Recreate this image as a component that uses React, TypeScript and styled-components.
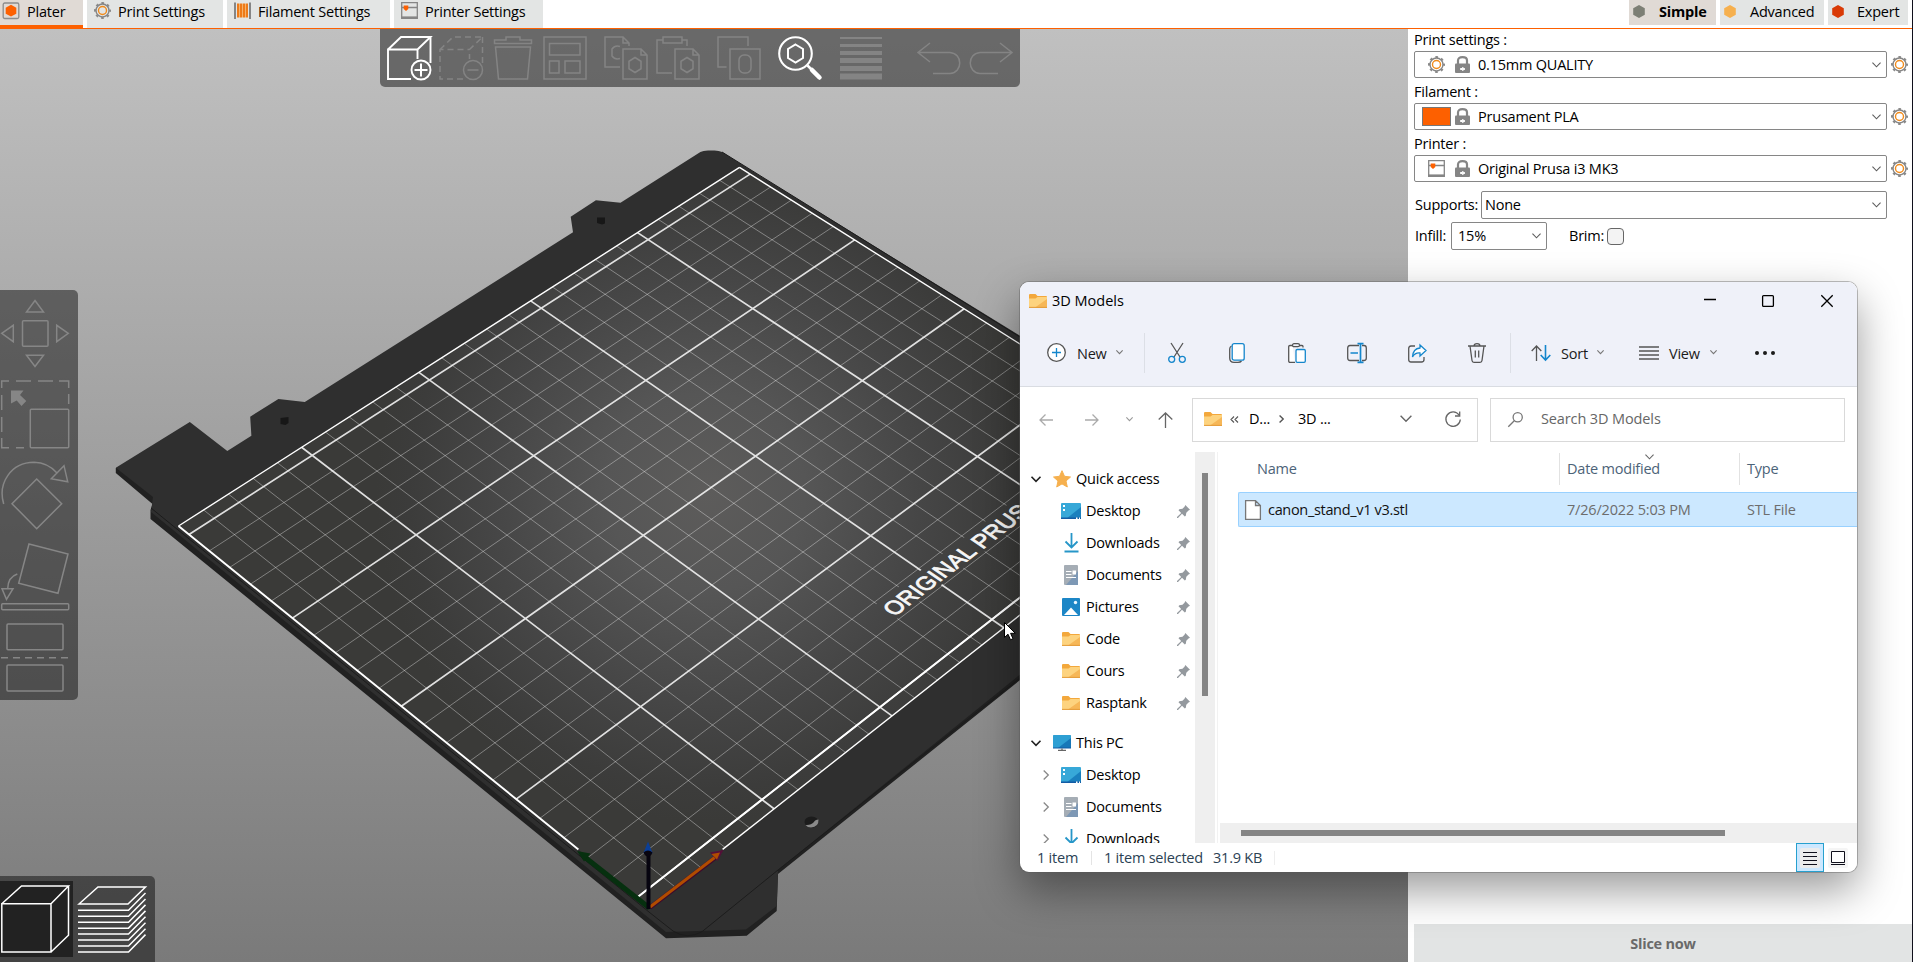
import React from "react";
import styled, { createGlobalStyle, css } from "styled-components";

const GlobalStyle = createGlobalStyle`
  *, *::before, *::after { box-sizing: border-box; }
  body { margin: 0; overflow: hidden; }
  svg { display: block; flex: none; overflow: visible; }
`;

const ORANGE = "#fd6000";

/* ---------- page frame ---------- */

const Page = styled.div`
  position: relative;
  width: 1913px;
  height: 962px;
  display: flex;
  flex-direction: column;
  overflow: hidden;
  background: #fff;
  color: #000;
  border-right: 1px solid #10101c;
  font-family: "Open Sans", "Noto Sans", sans-serif;
  font-size: 14.5px;
  letter-spacing: -0.22px;
  line-height: 20px;
  white-space: nowrap;
`;

const TopBar = styled.header`
  display: flex;
  justify-content: space-between;
  height: 29px;
  flex: none;
  border-bottom: 1px solid ${ORANGE};
`;

const TabList = styled.nav`
  display: flex;
  gap: 4px;
`;

const Tab = styled.div<{ $width: number; $active?: boolean }>`
  display: flex;
  align-items: flex-start;
  gap: 7px;
  width: ${(p) => p.$width}px;
  height: 28px;
  padding: 2px 0 0 ${(p) => (p.$active ? 2 : 7)}px;
  background: ${(p) => (p.$active ? "#e0dad5" : "#e3e5e4")};
  ${(p) => p.$active && css`border-bottom: 3px solid ${ORANGE};`}
`;

const ModeList = styled.div`
  display: flex;
  gap: 4px;
  padding-right: 4px;
`;

const Mode = styled.div<{ $width: number; $gap: number; $active?: boolean }>`
  display: flex;
  align-items: center;
  gap: ${(p) => p.$gap}px;
  width: ${(p) => p.$width}px;
  height: 25px;
  padding: 0 0 2px 4px;
  background: ${(p) => (p.$active ? "#e0dad5" : "#e3e5e4")};
  font-weight: ${(p) => (p.$active ? 700 : 400)};
`;

const Main = styled.main`
  display: flex;
  flex: 1;
  min-height: 0;
`;

/* ---------- 3D view ---------- */

const Viewport = styled.section`
  position: relative;
  width: 1408px;
  overflow: hidden;
  background: linear-gradient(#c0c0c0, #7a7a7a);
`;

const TopTools = styled.div`
  position: absolute;
  top: 0;
  left: 380px;
  display: flex;
  gap: 8px;
  width: 640px;
  height: 58px;
  padding: 7px 7px 0;
  border-radius: 0 0 5px 5px;
  background: rgba(0, 0, 0, 0.45);
`;

const Tool = styled.div<{ $lit?: boolean; $space?: number }>`
  width: 44px;
  height: 44px;
  margin-left: ${(p) => p.$space ?? 0}px;
  color: ${(p) => (p.$lit ? "#ffffff" : "#848484")};
`;

const SideTools = styled.div`
  position: absolute;
  top: 261px;
  left: 0;
  display: flex;
  flex-direction: column;
  gap: 13px;
  width: 78px;
  height: 410px;
  padding: 9px 0 0 1px;
  border-radius: 0 5px 5px 0;
  background: rgba(0, 0, 0, 0.45);
  color: #868686;
`;

const ViewSwitch = styled.div`
  position: absolute;
  left: 0;
  bottom: 0;
  display: flex;
  width: 155px;
  height: 86px;
  padding-top: 5px;
  border-radius: 0 5px 0 0;
  background: rgba(0, 0, 0, 0.45);
`;

const ViewButton = styled.div<{ $active?: boolean }>`
  width: 73px;
  height: 76px;
  background: ${(p) => (p.$active ? "#222222" : "transparent")};
`;

/* ---------- settings panel ---------- */

const Panel = styled.aside`
  display: flex;
  flex-direction: column;
  flex: 1;
  padding-left: 6px;
`;

const Label = styled.div`
  height: 22px;
  line-height: 22px;
  &:not(:first-child) { margin-top: 3px; }
`;

const Row = styled.div<{ $top?: number; $left?: number }>`
  display: flex;
  align-items: center;
  margin-top: ${(p) => p.$top ?? 0}px;
  margin-left: ${(p) => p.$left ?? 0}px;
`;

const Select = styled.div<{ $width: number; $height?: number; $pad?: number }>`
  display: flex;
  align-items: center;
  width: ${(p) => p.$width}px;
  height: ${(p) => p.$height ?? 27}px;
  padding: 0 5px 0 ${(p) => p.$pad ?? 3}px;
  border: 1px solid #868686;
  border-radius: 2px;
  background: #fff;
  & > :last-child { margin-left: auto; }
`;

const PresetIcon = styled.span`
  display: flex;
  justify-content: center;
  width: 29px;
  margin: 0 4px;
`;

const Swatch = styled.span`
  width: 29px;
  height: 19px;
  border: 1px solid #777;
  background: ${ORANGE};
`;

const PresetName = styled.span`
  margin-left: 8px;
`;

const GearSlot = styled.span`
  margin-left: 4px;
`;

const FieldName = styled.span<{ $width: number; $left?: number }>`
  width: ${(p) => p.$width}px;
  margin-left: ${(p) => p.$left ?? 0}px;
`;

const CheckBox = styled.span`
  width: 17px;
  height: 17px;
  border: 1px solid #666;
  border-radius: 4px;
  background: #f3f3f3;
`;

const SliceButton = styled.div`
  display: flex;
  align-items: center;
  justify-content: center;
  height: 38px;
  margin-top: auto;
  padding-top: 1px;
  background: #e2e4e4;
  color: #6a6a6a;
  font-weight: 700;
`;

/* ---------- explorer window ---------- */

const Explorer = styled.div`
  position: absolute;
  left: 1020px;
  top: 282px;
  display: flex;
  flex-direction: column;
  width: 837px;
  height: 590px;
  overflow: hidden;
  border-radius: 9px;
  background: #fff;
`;

const ExplorerShadow = styled.div`
  position: absolute;
  left: 1020px;
  top: 282px;
  width: 837px;
  height: 590px;
  border-radius: 9px;
  box-shadow: 0 0 0 1px rgba(90, 90, 90, 0.4), 0 18px 44px rgba(0, 0, 0, 0.4);
`;

const TitleBar = styled.div`
  display: flex;
  align-items: center;
  height: 38px;
  padding-left: 9px;
  background: #eff1f9;
  letter-spacing: 0;
  gap: 5px;
`;

const WindowButtons = styled.div`
  display: flex;
  margin-left: auto;
`;

const WindowButton = styled.div`
  display: flex;
  align-items: center;
  justify-content: center;
  width: 58px;
  height: 34px;
  &:last-child { width: 60px; }
`;

const CommandBar = styled.div`
  display: flex;
  align-items: center;
  height: 67px;
  border-bottom: 1px solid #d9dce2;
  background: #eff1f9;
  color: #1b1b1b;
`;

const Command = styled.div<{ $width: number; $left: number; $gap: number }>`
  display: flex;
  align-items: center;
  width: ${(p) => p.$width}px;
  padding: 0 0 1px ${(p) => p.$left}px;
  gap: ${(p) => p.$gap}px;
`;

const CommandText = styled.span<{ $after?: number }>`
  margin: 2px ${(p) => p.$after ?? 2}px 0 2px;
`;

const CommandIcon = styled.div`
  display: flex;
  justify-content: center;
  width: 60px;
`;

const Divider = styled.span<{ $height: number; $color?: string; $x?: number }>`
  width: 1px;
  height: ${(p) => p.$height}px;
  margin: 0 ${(p) => p.$x ?? 0}px;
  background: ${(p) => p.$color ?? "#dcdfe6"};
`;

const AddressRow = styled.div`
  display: flex;
  align-items: center;
  height: 65px;
`;

const NavArrows = styled.div`
  display: flex;
  align-items: center;
  width: 153px;
  margin-left: 19px;
`;

const NavGap = styled.span<{ $width: number }>`
  width: ${(p) => p.$width}px;
`;

const AddressBox = styled.div`
  display: flex;
  align-items: center;
  width: 286px;
  height: 44px;
  padding: 0 16px 1px 11px;
  border: 1px solid #d9d9d9;
`;

const Crumb = styled.span<{ $width: number; $pad?: number }>`
  display: flex;
  width: ${(p) => p.$width}px;
  padding-left: ${(p) => p.$pad ?? 0}px;
`;

const SearchBox = styled.div`
  display: flex;
  align-items: center;
  gap: 18px;
  width: 355px;
  height: 44px;
  margin-left: 12px;
  padding: 0 0 1px 17px;
  border: 1px solid #d9d9d9;
  color: #666;
  letter-spacing: -0.12px;
`;

const Body = styled.div`
  display: flex;
  height: 391px;
  flex: none;
`;

const Tree = styled.div`
  width: 175px;
  overflow: hidden;
  padding-top: 11px;
`;

const TreeRow = styled.div<{ $child?: boolean; $top?: number }>`
  display: flex;
  align-items: center;
  height: 32px;
  margin-top: ${(p) => p.$top ?? 0}px;
  padding: 0 5px 0 ${(p) => (p.$child ? 23 : 11)}px;
`;

const Twisty = styled.span<{ $child?: boolean }>`
  display: flex;
  width: ${(p) => (p.$child ? 16 : 20)}px;
`;

const TreeIcon = styled.span<{ $child?: boolean }>`
  display: flex;
  justify-content: center;
  width: ${(p) => (p.$child ? 24 : 22)}px;
  margin-right: 3px;
`;

const PinSlot = styled.span`
  margin-left: auto;
`;

const VScroll = styled.div`
  width: 20px;
  padding: 21px 7px 0;
  background: #efefef;
`;

const VThumb = styled.div`
  height: 223px;
  background: #858585;
`;

const Files = styled.div`
  display: flex;
  flex-direction: column;
  flex: 1;
  margin-left: 2px;
  border-left: 1px solid #f2f2f2;
`;

const FileHeader = styled.div`
  position: relative;
  display: flex;
  align-items: center;
  height: 33px;
  margin-bottom: 7px;
  padding-left: 20px;
  color: #4c6378;
`;

const HeadCell = styled.div<{ $width: number; $pad: number }>`
  display: flex;
  align-items: center;
  width: ${(p) => p.$width}px;
  height: 32px;
  padding: 0 0 0 ${(p) => p.$pad}px;
  & + & { border-left: 1px solid #e2e2e2; }
`;

const SortMark = styled.span`
  position: absolute;
  left: 427px;
  top: 2px;
`;

const FileRow = styled.div`
  display: flex;
  align-items: center;
  height: 35px;
  margin-left: 20px;
  padding-left: 6px;
  border: 1px solid #99d1ff;
  border-right: 0;
  border-radius: 2px 0 0 2px;
  background: #cce8ff;
`;

const FileCell = styled.span<{ $width: number; $dark?: boolean }>`
  display: flex;
  align-items: center;
  gap: 7px;
  width: ${(p) => p.$width}px;
  color: ${(p) => (p.$dark ? "#111" : "#6d6d6d")};
  letter-spacing: ${(p) => (p.$dark ? -0.32 : -0.18)}px;
`;

const HScroll = styled.div`
  height: 20px;
  margin: auto 0 0 2px;
  padding: 7px 0 0 21px;
  background: #efefef;
`;

const HThumb = styled.div`
  width: 484px;
  height: 6px;
  background: #858585;
`;

const StatusBar = styled.div`
  display: flex;
  align-items: center;
  height: 29px;
  padding-left: 17px;
  color: #2b4254;
`;

const StatusText = styled.span<{ $width: number }>`
  width: ${(p) => p.$width}px;
`;

const ViewMode = styled.span<{ $active?: boolean }>`
  display: flex;
  align-items: center;
  justify-content: center;
  width: 28px;
  height: 29px;
  margin-left: ${(p) => (p.$active ? "auto" : "0")};
  margin-right: ${(p) => (p.$active ? "0" : "5px")};
  border: 1px solid ${(p) => (p.$active ? "#26a0cf" : "transparent")};
  background: ${(p) => (p.$active ? "#cce8ff" : "transparent")};
`;

const Pointer = styled.div`
  position: absolute;
  left: 1004px;
  top: 622px;
`;

/* ---------- print bed geometry ---------- */

type Pt = [number, number];

/* Perspective map from bed millimetres to view pixels, fixed by a 150 x 200 mm quad. */
function makeProjection(w: number, h: number, q: [Pt, Pt, Pt, Pt]) {
  const [[x0, y0], [x1, y1], [x2, y2], [x3, y3]] = q;
  const dx1 = x1 - x2, dx2 = x3 - x2, dx3 = x0 - x1 + x2 - x3;
  const dy1 = y1 - y2, dy2 = y3 - y2, dy3 = y0 - y1 + y2 - y3;
  const den = dx1 * dy2 - dx2 * dy1;
  const g = (dx3 * dy2 - dx2 * dy3) / den;
  const k = (dx1 * dy3 - dx3 * dy1) / den;
  return (mx: number, my: number): Pt => {
    const u = mx / w, v = my / h, s = 1 + g * u + k * v;
    return [
      ((x1 - x0 + g * x1) * u + (x3 - x0 + k * x3) * v + x0) / s,
      ((y1 - y0 + g * y1) * u + (y3 - y0 + k * y3) * v + y0) / s,
    ];
  };
}

const project = makeProjection(150, 200, [
  [637.5, 897.2], [991.9, 619.5], [541.3, 308.2], [189, 534.5],
]);

const Y0 = -4.8, Y1 = 205.2;

const poly = (pts: Pt[]) =>
  pts.map(([x, y]) => { const p = project(x, y); return `${p[0].toFixed(1)},${p[1].toFixed(1)}`; }).join(" ");

const seg = (ax: number, ay: number, bx: number, by: number) => {
  const a = project(ax, ay), b = project(bx, by);
  return `M${a[0].toFixed(1)} ${a[1].toFixed(1)}L${b[0].toFixed(1)} ${b[1].toFixed(1)}`;
};

const range = (n: number) => Array.from({ length: n }, (_, i) => i);
const minor =
  range(26).filter((i) => i % 5).map((i) => seg(i * 10, Y0, i * 10, Y1)).join("") +
  range(21).filter((i) => i % 5).map((i) => seg(0, i * 10, 250, i * 10)).join("");
const major =
  [50, 100, 150, 200].map((x) => seg(x, Y0, x, Y1)).join("") +
  [0, 50, 100, 150, 200].map((y) => seg(0, y, 250, y)).join("");

function textMatrix(x: number, y: number) {
  const o = project(x, y), c = project(x + 30, y), u = project(x + 30, y + 6);
  const ax = (c[0] - o[0]) / 30, ay = (c[1] - o[1]) / 30;
  const bx = (u[0] - c[0]) / 6, by = (u[1] - c[1]) / 6;
  return `matrix(${ax} ${ay} ${-bx} ${-by} ${o[0]} ${o[1]})`;
}

const BedText = styled.text`
  font-family: "Liberation Sans", sans-serif;
  font-size: 7.9px;
  letter-spacing: 0.06px;
  fill: #f6f6f6;
  stroke: #f6f6f6;
  stroke-width: 0.3px;
`;

function Scene() {
  return (
    <svg width="1408" height="933" viewBox="0 29 1408 933">
      <defs>
        <radialGradient id="glow" gradientUnits="userSpaceOnUse" cx="706" cy="492" r="330">
          <stop offset="0" stopColor="#5d5c5b" />
          <stop offset="0.3" stopColor="#565656" />
          <stop offset="0.65" stopColor="#464646" />
          <stop offset="0.9" stopColor="#3c3c3b" />
          <stop offset="1" stopColor="#3a3a38" />
        </radialGradient>
      </defs>
      <path fill="#212121" d="M115.8 468V473L152.5 504L150.5 510V519L666 938.3L746.7 935.7L776.7 911L778 874L1100 616V380Z" />
      <path fill="#2f2f2f" d="M700.4 152Q703 150.5 708 150.5H714.5Q719 150.5 722 152L749.6 169.3L1100 385V610L778 870L776.7 906L746 929.5L666 932L151 512L153 497L115.8 467.7L189.8 422L227.3 451L251.4 435.7L250.2 416.7L278.4 399L304.8 402L573 232.3L570.7 216.7L595.9 200.3L620.5 202.7Z" />
      <path fill="none" stroke="#1c1c1c" d="M151 508L649 912L673 931Q687 940 702 931.7L778 870L1020 678M722 152L1020 337" />
      <path fill="#171717" d="M597 217.5h8v6l-3 1-5-1.500zM280.500 418l8-1v6l-3 2-5-1z" />
      <ellipse cx="811.500" cy="822" rx="7" ry="5.500" fill="#1c1c1c" />
      <path fill="#8a8a8a" d="M818.500 819.500Q819 827 811 827.500Q807.500 827.500 805.500 825Q811 825.500 814 822Q815 819.500 818.500 819.500Z" />

      <polygon points={poly([[0, Y0], [250, Y0], [250, Y1], [0, Y1]])} fill="url(#glow)" />
      <path d={minor} fill="none" stroke="#fff" strokeWidth="1" strokeOpacity="0.36" />
      <path d={major} fill="none" stroke="#f2f2f2" strokeWidth="1.7" strokeOpacity="0.9" />
      <path
        d={seg(0, Y1, 250, Y1) + seg(250, Y1, 250, Y0) + seg(29, Y0, 250, Y0)}
        fill="none"
        stroke="#fff"
        strokeWidth="1.4"
      />
      <path d={seg(0, 0, 250, 0) + seg(0, 24, 0, Y1)} fill="none" stroke="#fff" strokeWidth="1.9" />
      <polygon points={poly([[129, 20.5], [210, 20.5], [210, 29], [129, 29]])} fill="url(#glow)" />
      <BedText transform={textMatrix(129.8, 21.6)}>ORIGINAL PRUSA</BedText>

      <path d="M649.500 908L584 856.500" stroke="#06300f" strokeWidth="5" />
      <path d="M577 851L590.500 853.500L584 861.500Z" fill="#06300f" />
      <path d="M650 907.500L715 858" stroke="#3d0a2c" strokeWidth="4.500" />
      <path d="M650 907L716 856.500" stroke="#b04c00" strokeWidth="3" />
      <path d="M723.500 850L710 852.500L717.500 861Z" fill="#541038" />
      <path d="M720 852.500L711.500 854L717 859.500Z" fill="#b04c00" />
      <path d="M648.500 909V853" stroke="#06040f" strokeWidth="4" />
      <path d="M648 841.500L643.500 853Q648 857.500 652.500 853Z" fill="#0b3f98" />
      <path d="M643.500 852.500Q648 848.500 652.500 852.500Q651 856.500 648 856.500Q645 856.500 643.500 852.500Z" fill="#080510" />
    </svg>
  );
}

/* ---------- slicer icons ---------- */

const Stroke = ({ w, size, children }: { w: number; size: number; children: React.ReactNode }) => (
  <svg width={size} height={size} viewBox={`0 0 ${size} ${size}`} fill="none" stroke="currentColor" strokeWidth={w}>
    {children}
  </svg>
);

const hex = (cx: number, cy: number, rx: number, ry: number) =>
  `M${cx} ${cy - ry}L${cx + rx} ${cy - ry / 2}V${cy + ry / 2}L${cx} ${cy + ry}L${cx - rx} ${cy + ry / 2}V${cy - ry / 2}Z`;

const topTools: { id: string; lit?: boolean; space?: number; art: React.ReactNode }[] = [
  { id: "add", lit: true, art: <><path strokeWidth="1.900" d="M24 43H1V13.500H30.500M1 13.500L14 1H43.500L30.500 13.500V23M43.500 1V27" /><circle cx="34" cy="34" r="9.500" strokeWidth="1.900" /><path strokeWidth="2" d="M34 27.500V40.500M27.500 34H40.500" /></> },
  { id: "remove", art: <><path strokeDasharray="6 4" d="M24 43H1V13.500H30.500M1 13.500L14 1H43.500L30.500 13.500V23M43.500 1V27" /><circle cx="34" cy="34" r="9.500" /><path d="M28.500 34H39.500" /></> },
  { id: "delete", art: <path d="M3.500 4H15V1H29V4H40.500V7.500H3.500ZM4.500 11H39.500L36.500 43H7.500Z" /> },
  { id: "arrange", art: <path d="M1 1H43V43H1ZM6.500 7.500H37V19H6.500ZM6.500 25H16V37H6.500ZM22 25H37V37H22Z" /> },
  { id: "copy", space: 9, art: <><path d="M16 31H1V1H19L25 7V10M19 1V7H25M16 10.500Q11 9 8 13V20Q11 24 16 22.500" /><path d="M19 13H37L43 19V43H19ZM37 13V19H43" /><path d={hex(31, 29, 6, 7.500)} /></> },
  { id: "paste", art: <><path d="M16 37H1V4H7M26 4H31V10M7 1H26V7H7Z" /><path d="M19 13H37L43 19V43H19ZM37 13V19H43" /><path d={hex(31, 29, 6, 7.500)} /></> },
  { id: "instances", space: 9, art: <><path d="M9.500 31H1V1H31V10" /><path d="M13 13H43V43H13Z" /><rect x="22" y="19" width="12" height="18" rx="5" /></> },
  { id: "search", space: 9, lit: true, art: <><circle cx="17.500" cy="17.500" r="16.300" strokeWidth="2.100" /><path strokeWidth="2" d={hex(17.5, 17.5, 7.5, 9)} /><path strokeWidth="2.500" d="M29.500 29.500L33 33" /><path strokeWidth="4.500" strokeLinecap="round" d="M34 34L41.500 41.500" /></> },
  { id: "layers", space: 9, art: <g fill="currentColor" stroke="none"><rect x="1" y="1" width="42" height="2" /><rect x="1" y="8" width="42" height="3" /><rect x="1" y="15" width="42" height="4" /><rect x="1" y="22" width="42" height="5" /><rect x="1" y="30" width="42" height="5" /><rect x="1" y="37.500" width="42" height="6" /></g> },
  { id: "undo", space: 26, art: <path d="M13 7L1 16.500L13 26M1 16.500H33C46 17.500 46 36.500 33 37.500H16" /> },
  { id: "redo", art: <path d="M31 7L43 16.500L31 26M43 16.500H11C-2 17.500 -2 36.500 11 37.500H29" /> },
];

const sideTools: { id: string; art: React.ReactNode }[] = [
  { id: "move", art: <><rect x="21.500" y="21.700" width="25.500" height="25.600" rx="1" /><path d="M34 1.500L42.500 13H25.500ZM34 67.500L42.500 56.300H25.500ZM.7 34.300L12.300 26.300V42.700ZM67.300 34.300L55.700 26.300V42.700Z" /></> },
  { id: "scale", art: <><path d="M.7 8V1H8M15 1H30M37 1H52M58 1H67.700V8M67.700 14V24M.7 15V30M.7 37V52M.7 58V67.700H8M15 67.700H23" /><rect x="29.300" y="29.300" width="38.400" height="38.400" rx="1" /><path fill="currentColor" stroke="none" d="M10 10.500H22.500L19 15L25.300 21L20.500 26L15.700 20.500L10 23.500Z" /></> },
  { id: "rotate", art: <><path d="M2.700 43C-3.500 22 10 1.500 33 1.300Q47 1.500 56.500 12.500M63 4.700L50.300 17.700L66.700 20.700ZM35.700 18L60.700 42.700L35.700 67.700L11 42.700Z" /></> },
  { id: "place", art: <><path d="M28 2L67 12L57 51.300L17.700 41.300ZM16.300 32Q7 35 6.700 46.700M1 46.700H12L5.500 57.300Z" /><rect x=".7" y="61.700" width="67" height="6" rx="1" /></> },
  { id: "cut", art: <><rect x="6" y="1" width="56" height="25.700" rx="1" /><path strokeDasharray="7 5" d="M0 34.700H67" /><rect x="6" y="42" width="56" height="26" rx="1" /></> },
];

const HexMark = ({ color }: { color: string }) => (
  <svg width="12" height="13" viewBox="0 0 12 13"><path fill={color} d={hex(6, 6.5, 5.8, 6.5)} /></svg>
);

const Gear = () => (
  <svg width="17" height="17" viewBox="0 0 17 17" fill="none">
    <circle cx="8.500" cy="8.500" r="7.500" stroke="#8a8a8a" strokeWidth="2" strokeDasharray="2.600 3.290" strokeDashoffset="1.300" />
    <circle cx="8.500" cy="8.500" r="6.500" stroke="#858585" strokeWidth="1.400" />
    <circle cx="8.500" cy="8.500" r="4" stroke="#f08a1a" strokeWidth="1.400" />
  </svg>
);

const PlaterIcon = () => (
  <svg width="18" height="18" viewBox="0 0 18 18">
    <rect x="1.200" y="1" width="15.600" height="15.500" rx="1.500" fill="none" stroke="#8c8c8c" strokeWidth="1.300" />
    <path fill={ORANGE} d={hex(9, 8.7, 5.3, 5.9)} />
  </svg>
);

const SpoolIcon = () => (
  <svg width="17" height="18" viewBox="0 0 17 18">
    <path d="M1 .5V17M16 .5V17" stroke="#858585" strokeWidth="2" />
    <path d="M4 1.500V15.500M7 1.500V15.500M10 1.500V15.500M13 1.500V15.500" stroke="#ee7a18" strokeWidth="2" />
    <path d="M5.500 1.500V15.500M8.500 1.500V15.500M11.500 1.500V15.500" stroke="#f5b26c" strokeWidth="1" />
  </svg>
);

const PrinterIcon = () => (
  <svg width="17" height="17" viewBox="0 0 17 17" fill="none">
    <path d="M.7 .7H16.300V16.300H.7ZM.7 5.500H16.300" stroke="#858585" strokeWidth="1.300" />
    <path d="M0 15.500H17" stroke="#858585" strokeWidth="2.200" />
    <path fill={ORANGE} d="M2.700 3.500H7.300V7L5 9L2.700 7Z" />
  </svg>
);

const Lock = () => (
  <svg width="15" height="17" viewBox="0 0 15 17">
    <path d="M3 8V4.500Q3 1.200 7.500 1.200T12 4.500V8" fill="none" stroke="#858585" strokeWidth="2.200" />
    <rect x="0" y="7.500" width="15" height="9.500" rx="1" fill="#858585" />
    <path d="M7.500 11.500L10 13L7.500 14.500V13.500H5.500V12.500H7.500Z" fill="#fff" stroke="#fff" />
  </svg>
);

const Chevron = ({ w = 9, color = "#5c5c5c", sw = 1.1, right }: { w?: number; color?: string; sw?: number; right?: boolean }) => (
  <svg width={right ? w * 0.6 : w} height={right ? w : w * 0.6} viewBox={right ? "0 0 6 10" : "0 0 10 6"} fill="none" stroke={color} strokeWidth={(sw * 10) / w}>
    <path d={right ? "M.7 .5L5.300 5L.7 9.500" : "M.5 .7L5 5.300L9.500 .7"} />
  </svg>
);

/* ---------- explorer icons ---------- */

const Folder = () => (
  <svg width="18" height="14" viewBox="0 0 18 14">
    <path d="M0 1.200Q0 0 1 0H6.500L8.500 2H17Q18 2 18 3V6H0Z" fill="#f3a83c" />
    <path d="M0 4.500H6.500L8.500 3H18V13.500H0Z" fill="#fdd37f" />
    <path d="M18 5V13.500H6Z" fill="#f6b758" />
    <path d="M0 13.400H18" stroke="#e39a35" />
  </svg>
);

const Star = () => (
  <svg width="18" height="18" viewBox="0 0 18 18"><path fill="#f6b04e" stroke="#f6b04e" strokeLinejoin="round" d="M9 .7L11.500 6.300L17.500 7L13 11L14.300 17L9 13.900L3.700 17L5 11L.5 7L6.500 6.300Z" /></svg>
);

const DesktopIcon = () => (
  <svg width="20" height="16" viewBox="0 0 20 16">
    <rect width="20" height="16" rx="1" fill="#37a8d8" />
    <path d="M20 4V16H5Z" fill="#1a80be" /><path d="M0 14.500H20V16H0Z" fill="#125ca5" />
    <path d="M2 2h2v2h-2zM2 6h2v2h-2zM15 14.500h1.500V16H15zM18 14.500h1V16h-1z" fill="#fff" />
  </svg>
);

const DownloadIcon = () => (
  <svg width="15" height="20" viewBox="0 0 15 20" fill="none" stroke="#2696c8" strokeWidth="1.800"><path d="M7.500 0V14M1.500 8.500L7.500 14.500L13.500 8.500M.5 18.500H14.500" /></svg>
);

const DocumentIcon = () => (
  <svg width="14" height="20" viewBox="0 0 14 20">
    <rect width="14" height="20" rx="1" fill="#a5adb5" /><path d="M14 6V20H2Z" fill="#7d98b5" />
    <path d="M2 6.500H7.500M2 9.500H7.500M2 12.500H12" stroke="#fff" strokeWidth="1.200" /><rect x="8.500" y="5.500" width="3.500" height="4" fill="#fff" />
  </svg>
);

const PicturesIcon = () => (
  <svg width="18" height="18" viewBox="0 0 18 18">
    <rect width="18" height="18" rx="1" fill="#1c86c6" /><path d="M2 17L9 9.500L16 17Z" fill="#fff" /><circle cx="13.500" cy="4.500" r="1.700" fill="#e8f6ff" />
  </svg>
);

const PcIcon = () => (
  <svg width="18" height="16" viewBox="0 0 18 16">
    <rect width="18" height="13" rx=".5" fill="#2e9fd3" /><path d="M18 3V13H5Z" fill="#1777b8" /><path d="M0 13H18" stroke="#125ca5" />
    <path d="M9 13.500V15.300M5 15.300H13" stroke="#666" strokeWidth="1.300" />
  </svg>
);

const Pin = () => (
  <svg width="13" height="13" viewBox="0 0 13 13">
    <path fill="#94999e" d="M8.300 0L13 4.700L11.500 5.500L9.300 7.700L8.800 10.700L7.800 11.500L5 8.800L1 13H0V12L4.200 8L1.500 5.200L2.300 4.200L5.500 3.800L7.500 1.700Z" />
  </svg>
);

const Line = ({ w, h, children, color = "#555" }: { w: number; h: number; children: React.ReactNode; color?: string }) => (
  <svg width={w} height={h} viewBox={`0 0 ${w} ${h}`} fill="none" stroke={color} strokeWidth="1.300">{children}</svg>
);

const BLUE = "#1486cc";

const commands: { id: string; art: React.ReactNode }[] = [
  { id: "cut", art: <Line w={18} h={20}><path d="M3 0L12 14M15 0L6 14" /><circle cx="3.700" cy="16.300" r="3" stroke={BLUE} /><circle cx="14.300" cy="16.300" r="3" stroke={BLUE} /></Line> },
  { id: "copy", art: <Line w={16} h={20}><path d="M2.500 3Q.7 4 .7 6V15Q.7 19.300 5 19.300H9Q11.500 19.300 12.500 18" /><rect x="3.200" y=".7" width="12" height="16.500" rx="2" fill="#fff" stroke={BLUE} /></Line> },
  { id: "paste", art: <Line w={18} h={20}><path d="M7 19.300H2Q.7 19.300 .7 18V3.500Q.7 2.500 2 2.500H4.500M11.500 2.500H14Q15 2.500 15 3.500V4.500" fill="#fff" /><rect x="4.500" y=".7" width="7" height="3" rx="1.500" /><rect x="8" y="6.500" width="9.300" height="12.800" rx="1.200" fill="#fff" stroke={BLUE} /></Line> },
  { id: "rename", art: <Line w={20} h={20}><path d="M12 17.500H3Q.7 17.500 .7 15V5Q.7 2.500 3 2.500H12M15 2.500H17Q19.300 2.500 19.300 5V15Q19.300 17.500 17 17.500H15" /><path stroke={BLUE} strokeWidth="1.700" d="M3.500 10H11M13.500 .7V19.300M10.500 .7H16.500M10.500 19.300H16.500" /></Line> },
  { id: "share", art: <Line w={19} h={19}><path d="M7 2H3Q.7 2 .7 4.500V15.500Q.7 18 3 18H13.500Q16 18 16 15.500V13" /><path stroke={BLUE} fill="#fff" d="M12 1L18 6.500L12 12V9Q7 8.500 4.500 13Q5 4.500 12 4Z" /></Line> },
  { id: "delete", art: <Line w={18} h={20}><path d="M0 3H18M6 3Q6 .7 9 .7T12 3M2 3L4 17.500Q4.200 19.300 6 19.300H12Q13.800 19.300 14 17.500L16 3M7.300 7.500V14.500M10.700 7.500V14.500" /></Line> },
];

const quickItems: { name: string; icon: React.ReactNode }[] = [
  { name: "Desktop", icon: <DesktopIcon /> },
  { name: "Downloads", icon: <DownloadIcon /> },
  { name: "Documents", icon: <DocumentIcon /> },
  { name: "Pictures", icon: <PicturesIcon /> },
  { name: "Code", icon: <Folder /> },
  { name: "Cours", icon: <Folder /> },
  { name: "Rasptank", icon: <Folder /> },
];

const pcItems = [quickItems[0], quickItems[2], quickItems[1]];

const presets: { label: string; name: string; icon: React.ReactNode }[] = [
  { label: "Print settings :", name: "0.15mm QUALITY", icon: <Gear /> },
  { label: "Filament :", name: "Prusament PLA", icon: <Swatch /> },
  { label: "Printer :", name: "Original Prusa i3 MK3", icon: <PrinterIcon /> },
];

function ExplorerWindow() {
  return (
    <Explorer>
      <TitleBar>
        <Folder />
        <span>3D Models</span>
        <WindowButtons>
          <WindowButton><Line w={12} h={12} color="#000"><path d="M0 4.500H12" /></Line></WindowButton>
          <WindowButton><Line w={12} h={12} color="#000"><rect x=".6" y=".6" width="10.800" height="10.800" rx="1" /></Line></WindowButton>
          <WindowButton><Line w={12} h={12} color="#000"><path d="M.3 .3L11.700 11.700M11.700 .3L.3 11.700" /></Line></WindowButton>
        </WindowButtons>
      </TitleBar>
      <CommandBar>
        <Command $width={124} $left={27} $gap={9}>
          <Line w={19} h={19}><circle cx="9.500" cy="9.500" r="8.800" fill="#fff" /><path stroke={BLUE} d="M9.500 5V14M5 9.500H14" /></Line>
          <CommandText $after={0}>New</CommandText>
          <Chevron w={7} color="#777" />
        </Command>
        <Divider $height={40} />
        <Row $left={2}>{commands.map((c) => <CommandIcon key={c.id}>{c.art}</CommandIcon>)}</Row>
        <Divider $height={40} $x={3} />
        <Command $width={107} $left={17} $gap={8}>
          <Line w={20} h={16}><path d="M5.500 16V1M.7 6L5.500 1L10.300 6" /><path stroke={BLUE} strokeWidth="1.600" d="M14.500 0V15M9.700 10L14.500 15L19.300 10" /></Line>
          <CommandText $after={1}>Sort</CommandText>
          <Chevron w={7} color="#777" />
        </Command>
        <Command $width={134} $left={18} $gap={8}>
          <Line w={20} h={14}><path d="M0 1H20M0 5H20M0 9H20M0 13H20" /></Line>
          <CommandText $after={2}>View</CommandText>
          <Chevron w={7} color="#777" />
        </Command>
        <svg width="20" height="4" viewBox="0 0 20 4" fill="#1b1b1b"><circle cx="2" cy="2" r="2" /><circle cx="10" cy="2" r="2" /><circle cx="18" cy="2" r="2" /></svg>
      </CommandBar>
      <AddressRow>
        <NavArrows>
          <Line w={14} h={12} color="#aaa"><path d="M14 6H1M6.500 .5L1 6L6.500 11.500" /></Line>
          <NavGap $width={32} />
          <Line w={14} h={12} color="#aaa"><path d="M0 6H13M7.500 .5L13 6L7.500 11.500" /></Line>
          <NavGap $width={27} />
          <Chevron w={7} color="#999" />
          <NavGap $width={25} />
          <Line w={15} h={16} color="#666"><path d="M7.500 16V1M.7 7.500L7.500 1L14.300 7.500" /></Line>
        </NavArrows>
        <AddressBox>
          <Folder />
          <Crumb $width={27} $pad={8}>
            <Line w={9} h={7} color="#555"><path strokeWidth="1.100" d="M4 .5L1 3.500L4 6.500M8 .5L5 3.500L8 6.500" /></Line>
          </Crumb>
          <Crumb $width={30}>D...</Crumb>
          <Crumb $width={19}><Chevron w={8} right color="#555" sw={1.400} /></Crumb>
          <Crumb $width={102}>3D ...</Crumb>
          <Chevron w={12} color="#666" sw={1.400} />
          <Crumb $width={33} />
          <Line w={16} h={16} color="#666"><path d="M14 4A7.200 7.200 0 1 0 15.300 8.500M14.700 .5V5H10" /></Line>
        </AddressBox>
        <SearchBox>
          <Line w={15} h={15} color="#777"><circle cx="9.700" cy="5.300" r="4.600" /><path d="M6.500 8.500L.3 14.700" /></Line>
          <span>Search 3D Models</span>
        </SearchBox>
      </AddressRow>
      <Body>
        <Tree>
          <TreeRow><Twisty><Chevron w={10} color="#222" sw={1.600} /></Twisty><TreeIcon><Star /></TreeIcon>Quick access</TreeRow>
          {quickItems.map((it) => (
            <TreeRow key={it.name} $child>
              <Twisty $child /><TreeIcon $child>{it.icon}</TreeIcon>{it.name}<PinSlot><Pin /></PinSlot>
            </TreeRow>
          ))}
          <TreeRow $top={8}><Twisty><Chevron w={10} color="#222" sw={1.600} /></Twisty><TreeIcon><PcIcon /></TreeIcon>This PC</TreeRow>
          {pcItems.map((it) => (
            <TreeRow key={it.name} $child>
              <Twisty $child><Chevron w={10} right color="#888" sw={1.300} /></Twisty><TreeIcon $child>{it.icon}</TreeIcon>{it.name}
            </TreeRow>
          ))}
        </Tree>
        <VScroll><VThumb /></VScroll>
        <Files>
          <FileHeader>
            <HeadCell $width={321} $pad={19}>Name</HeadCell>
            <HeadCell $width={180} $pad={7}>Date modified</HeadCell>
            <HeadCell $width={110} $pad={7}>Type</HeadCell>
            <SortMark><Chevron w={9} color="#666" /></SortMark>
          </FileHeader>
          <FileRow>
            <FileCell $width={322} $dark>
              <Line w={16} h={20} color="#777"><path fill="#fff" d="M.6 .6H10.500L15.400 5.500V19.400H.6ZM10.500 .6V5.500H15.400" /></Line>
              canon_stand_v1 v3.stl
            </FileCell>
            <FileCell $width={180}>7/26/2022 5:03 PM</FileCell>
            <FileCell $width={90}>STL File</FileCell>
          </FileRow>
          <HScroll><HThumb /></HScroll>
        </Files>
      </Body>
      <StatusBar>
        <StatusText $width={54}>1 item</StatusText>
        <Divider $height={14} $color="#e4e4e4" />
        <FieldName $width={109} $left={12}>1 item selected</FieldName>
        <StatusText $width={61}>31.9 KB</StatusText>
        <Divider $height={14} $color="#eeeeee" />
        <ViewMode $active><svg width="20" height="20" viewBox="0 0 20 20"><rect width="20" height="20" rx="2" fill="#ececec" /><path d="M3 4.500H17M3 8.500H17M3 12.500H17M3 16.500H17" stroke="#10101c" /></svg></ViewMode>
        <ViewMode><svg width="20" height="20" viewBox="0 0 20 20"><rect width="20" height="20" rx="2" fill="#f5f5f5" /><path d="M3.500 3.500H16.500V14.500H3.500ZM3 16.500H17" fill="#fff" stroke="#10101c" /></svg></ViewMode>
      </StatusBar>
    </Explorer>
  );
}

export default function App() {
  return (
    <>
      <GlobalStyle />
      <Page>
        <TopBar>
          <TabList>
            <Tab $width={83} $active><PlaterIcon />Plater</Tab>
            <Tab $width={136}><Gear />Print Settings</Tab>
            <Tab $width={163}><SpoolIcon />Filament Settings</Tab>
            <Tab $width={149}><PrinterIcon />Printer Settings</Tab>
          </TabList>
          <ModeList>
            <Mode $width={87} $gap={14} $active><HexMark color="#7d7f75" />Simple</Mode>
            <Mode $width={104} $gap={14}><HexMark color="#f6b04e" />Advanced</Mode>
            <Mode $width={80} $gap={13}><HexMark color="#d93a06" />Expert</Mode>
          </ModeList>
        </TopBar>
        <Main>
          <Viewport>
            <Scene />
            <TopTools>
              {topTools.map((t) => (
                <Tool key={t.id} $lit={t.lit} $space={t.space}><Stroke size={44} w={1.5}>{t.art}</Stroke></Tool>
              ))}
            </TopTools>
            <SideTools>
              {sideTools.map((t) => <Stroke key={t.id} size={68} w={1.5}>{t.art}</Stroke>)}
            </SideTools>
            <ViewSwitch>
              <ViewButton $active>
                <svg width="73" height="76" viewBox="0 0 73 76" fill="none" stroke="#fff" strokeWidth="1.500">
                  <path d="M1.800 22.700H51V71H1.800ZM1.800 22.700L21.500 5H68.500L51 22.700M68.500 5V54.300L51 71" />
                </svg>
              </ViewButton>
              <ViewButton>
                <svg width="73" height="76" viewBox="0 0 73 76" fill="none" stroke="#fff" strokeWidth="1.500">
                  <path d="M6 23L25 6H72.500L55 23Z" />
                  {range(8).map((i) => <path key={i} d={`M5 ${29.3 + i * 5.95}H55.500L72.500 ${12 + i * 5.95}`} />)}
                </svg>
              </ViewButton>
            </ViewSwitch>
          </Viewport>
          <Panel>
            {presets.map((p) => (
              <React.Fragment key={p.label}>
                <Label>{p.label}</Label>
                <Row>
                  <Select $width={473}>
                    <PresetIcon>{p.icon}</PresetIcon><Lock /><PresetName>{p.name}</PresetName><Chevron />
                  </Select>
                  <GearSlot><Gear /></GearSlot>
                </Row>
              </React.Fragment>
            ))}
            <Row $top={9}>
              <FieldName $width={66} $left={1}>Supports:</FieldName>
              <Select $width={406} $height={28}>None<Chevron /></Select>
            </Row>
            <Row $top={3}>
              <FieldName $width={36} $left={1}>Infill:</FieldName>
              <Select $width={96} $height={28} $pad={6}>15%<Chevron /></Select>
              <FieldName $width={38} $left={22}>Brim:</FieldName>
              <CheckBox />
            </Row>
            <SliceButton>Slice now</SliceButton>
          </Panel>
        </Main>
        <ExplorerShadow />
        <Pointer>
          <svg width="13" height="19" viewBox="0 0 13 19"><path d="M.5 .5V15.500L4 12.200L6.500 17.800L9 16.700L6.600 11.300H11.300Z" fill="#fff" stroke="#000" /></svg>
        </Pointer>
        <ExplorerWindow />
      </Page>
    </>
  );
}
